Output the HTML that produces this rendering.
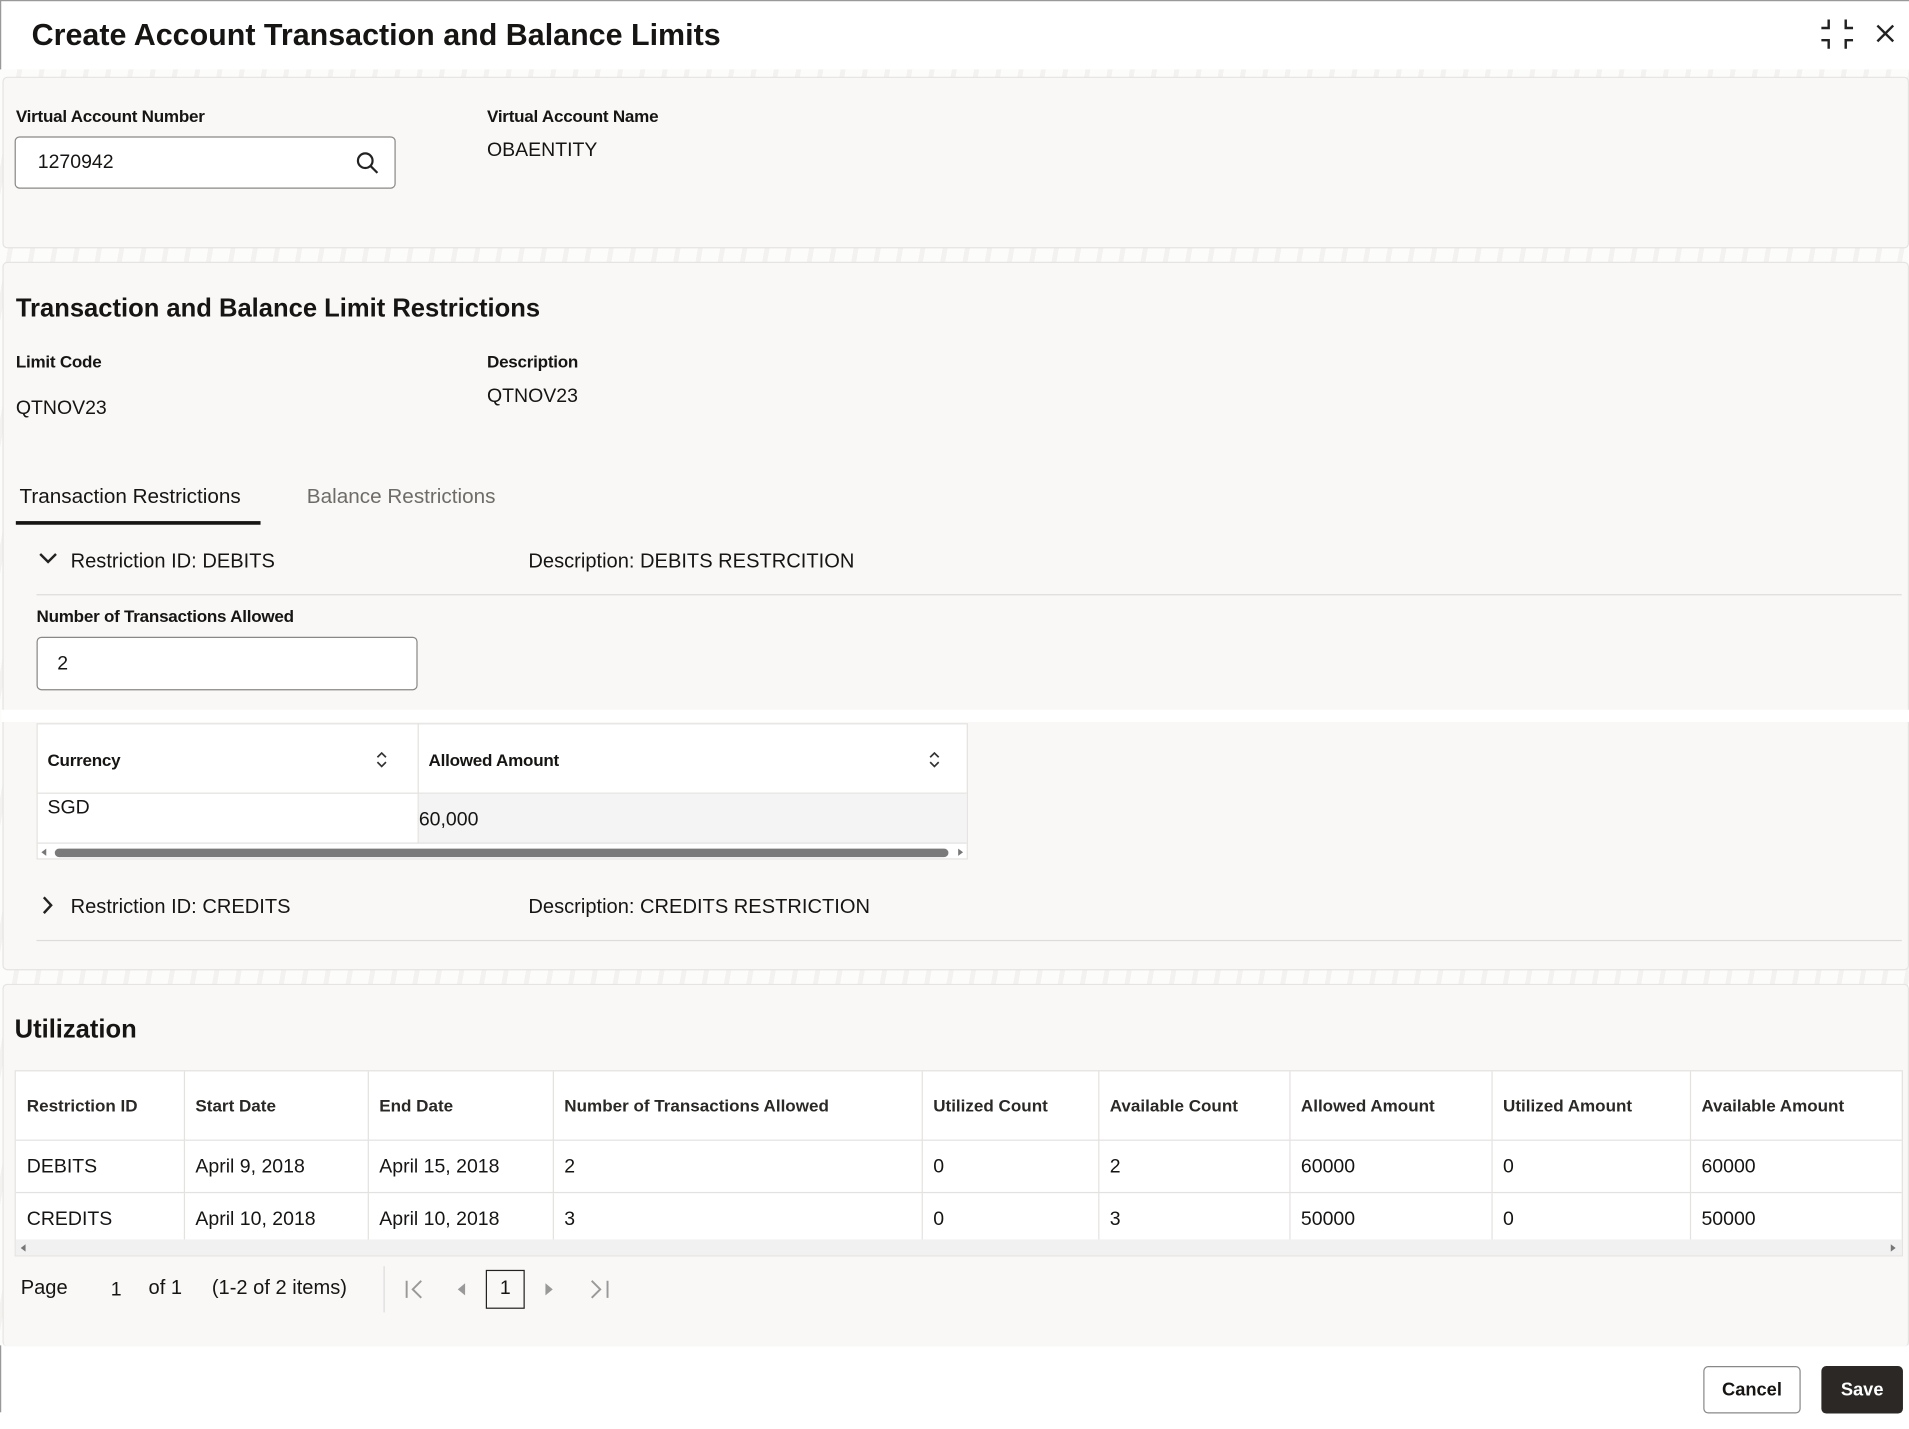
<!DOCTYPE html>
<html><head><meta charset="utf-8"><style>
html,body{margin:0;padding:0;width:1909px;height:1429px;overflow:hidden;background:#fff;}
#w{position:absolute;left:0;top:0;width:1568px;height:1174px;transform:scale(1.2175);transform-origin:0 0;font-family:"Liberation Sans",sans-serif;color:#161513;background:#fff;}
.a{position:absolute;white-space:nowrap;}
.lbl{font-size:14px;font-weight:bold;color:#161513;letter-spacing:-0.2px}
.val{font-size:16px;}
.panel{position:absolute;left:2px;right:0;background:#f9f8f6;border:1px solid #e6e4e1;border-radius:4px;}
.pat{position:absolute;left:0;right:0;background:repeating-linear-gradient(100deg,#fcfcfb 0 14px,#f3f2f0 14px 18px);}
.inp{position:absolute;background:#fff;border:1px solid #8a8886;border-radius:4px;box-sizing:border-box;}
table{border-collapse:collapse;table-layout:fixed;}
.ut td,.ut th{border-right:1px solid #e4e2df;border-bottom:1px solid #e4e2df;text-align:left;padding:0 9px;white-space:nowrap;overflow:hidden}
.ut th{height:56px;font-size:14px;font-weight:bold;color:#2b2926;}
.ut td{height:40px;font-size:16px;padding-top:2px}
</style></head><body><div id="w">
<div style="position:absolute;left:0;top:0;width:1568px;height:1px;background:#999"></div>
<div style="position:absolute;left:0;top:0;width:1px;height:1160px;background:#999"></div>
<div class="a" style="left:26px;top:15px;font-size:25px;font-weight:bold">Create Account Transaction and Balance Limits</div>
<svg class="a" style="left:1495px;top:15px" width="28" height="26" viewBox="0 0 28 26" fill="none" stroke="#222" stroke-width="2"><path d="M7 1v7H1M21 1v7h6M7 25v-7H1M21 25v-7h6"/></svg>
<svg class="a" style="left:1541px;top:20px" width="15" height="15" viewBox="0 0 15 15" stroke="#222" stroke-width="2"><path d="M1 1L14 14M14 1L1 14"/></svg>
<div class="pat" style="top:57px;height:1048px"></div>
<div class="panel" style="top:63px;height:139px"></div>
<div class="a lbl" style="left:13px;top:87px">Virtual Account Number</div>
<div class="inp" style="left:12px;top:112px;width:313px;height:43px"></div>
<div class="a val" style="left:31px;top:125px">1270942</div>
<svg class="a" style="left:292px;top:124px" width="19" height="19" viewBox="0 0 19 19" fill="none" stroke="#222" stroke-width="1.8"><circle cx="8" cy="8" r="6"/><path d="M12.5 12.5L18 18"/></svg>
<div class="a lbl" style="left:400px;top:87px">Virtual Account Name</div>
<div class="a val" style="left:400px;top:115px">OBAENTITY</div>
<div class="panel" style="top:215px;height:580px"></div>
<div class="a" style="left:13px;top:242px;font-size:21px;font-weight:bold">Transaction and Balance Limit Restrictions</div>
<div class="a lbl" style="left:13px;top:289px">Limit Code</div>
<div class="a val" style="left:13px;top:327px">QTNOV23</div>
<div class="a lbl" style="left:400px;top:289px">Description</div>
<div class="a val" style="left:400px;top:317px">QTNOV23</div>
<div class="a" style="left:16px;top:398px;font-size:17px">Transaction Restrictions</div>
<div class="a" style="left:252px;top:398px;font-size:17px;color:#6f6c68">Balance Restrictions</div>
<div class="a" style="left:13px;top:428px;width:201px;height:3px;background:#161513"></div>
<svg class="a" style="left:32px;top:454px" width="15" height="10" viewBox="0 0 15 10" fill="none" stroke="#222" stroke-width="2"><path d="M1 1l6.5 6.5L14 1"/></svg>
<div class="a" style="left:58px;top:452px;font-size:16.5px">Restriction ID: DEBITS</div>
<div class="a" style="left:434px;top:452px;font-size:16.5px">Description: DEBITS RESTRCITION</div>
<div class="a" style="left:30px;top:488px;width:1532px;height:1px;background:#dedcd9"></div>
<div class="a lbl" style="left:30px;top:498px">Number of Transactions Allowed</div>
<div class="inp" style="left:30px;top:523px;width:313px;height:44px"></div>
<div class="a val" style="left:47px;top:537px">2</div>
<div class="a" style="left:1px;top:583px;width:1567px;height:10px;background:#fff"></div>
<div class="a" style="left:30px;top:594px;width:765px;height:112px;background:#fff;border:1px solid #e4e2df;box-sizing:border-box"></div>
<div class="a" style="left:343px;top:594px;width:1px;height:98px;background:#e4e2df"></div>
<div class="a" style="left:31px;top:651px;width:763px;height:1px;background:#e4e2df"></div>
<div class="a" style="left:344px;top:652px;width:450px;height:40px;background:#f4f4f4"></div>
<div class="a" style="left:31px;top:692px;width:763px;height:1px;background:#e4e2df"></div>
<div class="a lbl" style="left:39px;top:616px">Currency</div>
<div class="a lbl" style="left:352px;top:616px">Allowed Amount</div>
<svg class="a" style="left:309px;top:617px" width="9" height="14" viewBox="0 0 9 14" fill="none" stroke="#333" stroke-width="1.4"><path d="M1 5l3.5-3.5L8 5M1 9l3.5 3.5L8 9"/></svg>
<svg class="a" style="left:763px;top:617px" width="9" height="14" viewBox="0 0 9 14" fill="none" stroke="#333" stroke-width="1.4"><path d="M1 5l3.5-3.5L8 5M1 9l3.5 3.5L8 9"/></svg>
<div class="a val" style="left:39px;top:655px">SGD</div>
<div class="a val" style="left:344px;top:665px">60,000</div>
<div class="a" style="left:45px;top:697px;width:734px;height:7px;border-radius:4px;background:#7a7a7a"></div>
<div class="a" style="left:34px;top:697px;width:0;height:0;border:3px solid transparent;border-right:4px solid #777;border-left:0"></div>
<div class="a" style="left:787px;top:697px;width:0;height:0;border:3px solid transparent;border-left:4px solid #777;border-right:0"></div>
<svg class="a" style="left:34px;top:736px" width="10" height="15" viewBox="0 0 10 15" fill="none" stroke="#222" stroke-width="2"><path d="M2 1l6 6.5L2 14"/></svg>
<div class="a" style="left:58px;top:736px;font-size:16.5px">Restriction ID: CREDITS</div>
<div class="a" style="left:434px;top:736px;font-size:16.5px">Description: CREDITS RESTRICTION</div>
<div class="a" style="left:30px;top:772px;width:1532px;height:1px;background:#dedcd9"></div>
<div class="panel" style="top:808px;height:297px;border-bottom:none"></div>
<div class="a" style="left:12px;top:834px;font-size:21px;font-weight:bold">Utilization</div>
<div class="a" style="left:12px;top:879px;width:1551px;height:153px;background:#fff;border:1px solid #e4e2df;box-sizing:border-box;overflow:hidden">
<table class="ut" style="width:1550px"><colgroup><col style="width:138px"><col style="width:151px"><col style="width:152px"><col style="width:303px"><col style="width:145px"><col style="width:157px"><col style="width:166px"><col style="width:163px"><col></colgroup><tr><th>Restriction ID</th><th>Start Date</th><th>End Date</th><th>Number of Transactions Allowed</th><th>Utilized Count</th><th>Available Count</th><th>Allowed Amount</th><th>Utilized Amount</th><th>Available Amount</th></tr>
<tr><td>DEBITS</td><td>April 9, 2018</td><td>April 15, 2018</td><td>2</td><td>0</td><td>2</td><td>60000</td><td>0</td><td>60000</td></tr>
<tr><td>CREDITS</td><td>April 10, 2018</td><td>April 10, 2018</td><td>3</td><td>0</td><td>3</td><td>50000</td><td>0</td><td>50000</td></tr></table>
<div class="a" style="left:0;top:138px;width:1550px;height:13px;background:#f1f1f1"></div>
<div class="a" style="left:4px;top:142px;width:0;height:0;border:3px solid transparent;border-right:4px solid #777;border-left:0"></div>
<div class="a" style="left:1540px;top:142px;width:0;height:0;border:3px solid transparent;border-left:4px solid #777;border-right:0"></div>
</div>
<div class="a" style="left:17px;top:1049px;font-size:16.5px">Page</div>
<div class="a val" style="left:91px;top:1051px">1</div>
<div class="a" style="left:122px;top:1049px;font-size:16.5px">of 1</div>
<div class="a" style="left:174px;top:1049px;font-size:16.5px">(1-2 of 2 items)</div>
<div class="a" style="left:315px;top:1040px;width:1px;height:38px;background:#ddd"></div>
<svg class="a" style="left:332px;top:1051px" width="18" height="16" viewBox="0 0 18 16" fill="none" stroke="#999" stroke-width="1.6"><path d="M2 1v14M14 1L7 8l7 7"/></svg>
<div class="a" style="left:376px;top:1054px;width:0;height:0;border:5px solid transparent;border-right:6px solid #999;border-left:0"></div>
<div class="a" style="left:399px;top:1043px;width:32px;height:32px;border:1px solid #222;box-sizing:border-box;text-align:center;line-height:30px;font-size:16px">1</div>
<div class="a" style="left:448px;top:1054px;width:0;height:0;border:5px solid transparent;border-left:6px solid #999;border-right:0"></div>
<svg class="a" style="left:483px;top:1051px" width="18" height="16" viewBox="0 0 18 16" fill="none" stroke="#999" stroke-width="1.6"><path d="M16 1v14M3 1l7 7-7 7"/></svg>
<div class="a" style="left:1399px;top:1122px;width:80px;height:39px;border:1px solid #8a8886;border-radius:4px;box-sizing:border-box;text-align:center;line-height:37px;font-size:15px;font-weight:bold;background:#fff">Cancel</div>
<div class="a" style="left:1496px;top:1122px;width:67px;height:39px;border-radius:4px;background:#2c2825;color:#fff;text-align:center;line-height:39px;font-size:15px;font-weight:bold">Save</div>
</div></body></html>
